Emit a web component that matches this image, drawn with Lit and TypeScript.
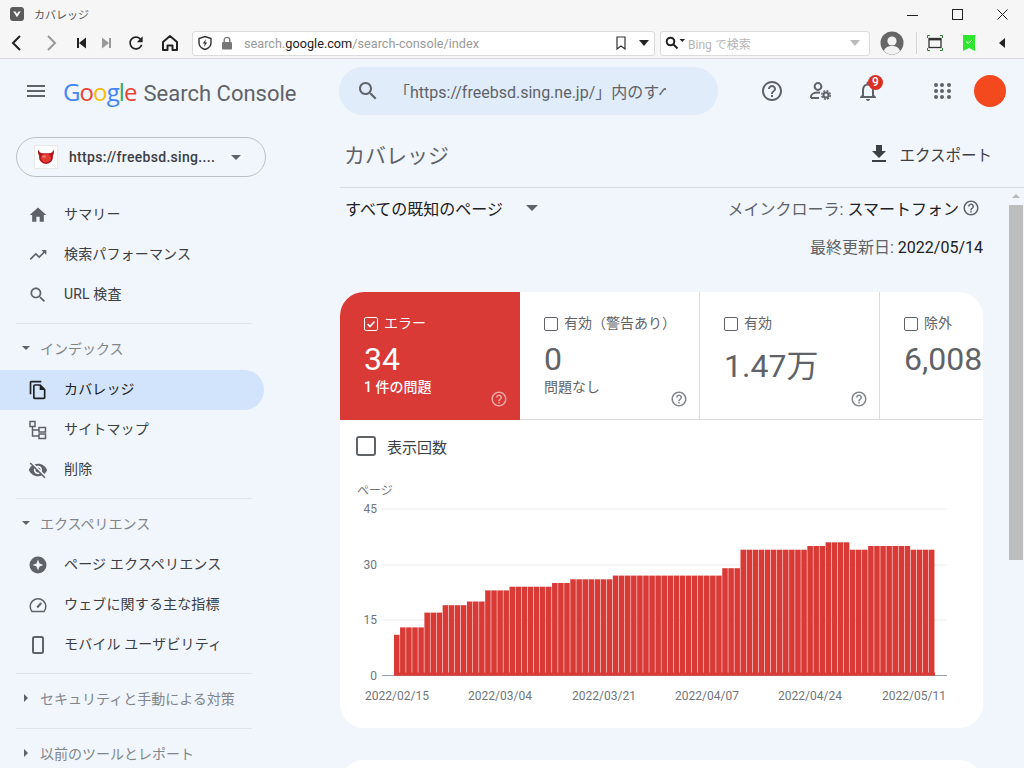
import { LitElement, html, css, svg } from 'lit'
import { customElement } from 'lit/decorators.js'

const icon = (d: string, size = 24) => html`<svg class="ic" width=${size} height=${size} viewBox="0 0 24 24"><path d=${d}></path></svg>`

const HELP = 'M11 18h2v-2h-2v2zm1-16C6.48 2 2 6.48 2 12s4.48 10 10 10 10-4.48 10-10S17.52 2 12 2zm0 18c-4.41 0-8-3.59-8-8s3.59-8 8-8 8 3.59 8 8-3.59 8-8 8zm0-14c-2.21 0-4 1.79-4 4h2c0-1.1.9-2 2-2s2 .9 2 2c0 2-3 1.75-3 5h2c0-2.25 3-2.5 3-5 0-2.21-1.79-4-4-4z'
const SEARCH = 'M15.5 14h-.79l-.28-.27C15.41 12.59 16 11.11 16 9.5 16 5.91 13.09 3 9.5 3S3 5.91 3 9.5 5.91 16 9.5 16c1.61 0 3.09-.59 4.23-1.57l.27.28v.79l5 4.99L20.49 19l-4.99-5zm-6 0C7.01 14 5 11.99 5 9.5S7.01 5 9.5 5 14 7.01 14 9.5 11.99 14 9.5 14z'
const BELL = 'M12 22c1.1 0 2-.9 2-2h-4c0 1.1.9 2 2 2zm6-6v-5c0-3.07-1.63-5.64-4.5-6.32V4c0-.83-.67-1.5-1.5-1.5s-1.5.67-1.5 1.5v.68C7.64 5.36 6 7.92 6 11v5l-2 2v1h16v-1l-2-2zm-2 1H8v-6c0-2.48 1.51-4.5 4-4.5s4 2.02 4 4.5v6z'

const navIcons: Record<string, unknown> = {
  home: icon('M10 20v-6h4v6h5v-8h3L12 3 2 12h3v8z', 20),
  trend: icon('M16 6l2.29 2.29-4.88 4.88-4-4L2 16.59 3.41 18l6-6 4 4 6.3-6.29L22 12V6z', 20),
  search: icon(SEARCH, 20),
  copy: html`<svg class="ic dark" width="20" height="20" viewBox="0 0 24 24"><path d="M16 1H4c-1.1 0-2 .9-2 2v14h2V3h12V1zm-1 4H8c-1.1 0-1.99.9-1.99 2L6 21c0 1.1.89 2 1.99 2H19c1.1 0 2-.9 2-2V11l-6-6zM8 21V7h6v5h5v9H8z"></path></svg>`,
  sitemap: html`<svg width="20" height="20" viewBox="0 0 20 20" fill="none" stroke="#5f6368" stroke-width="1.5"><rect x="2" y="1.5" width="5" height="5"></rect><rect x="11" y="7.5" width="6.5" height="4.5"></rect><rect x="11" y="14" width="6.5" height="4.5"></rect><path d="M4.5 6.5V16H11M4.5 10H11"></path></svg>`,
  eye: icon('M12 7c2.76 0 5 2.24 5 5 0 .65-.13 1.26-.36 1.83l2.92 2.92c1.51-1.26 2.7-2.89 3.43-4.75-1.73-4.39-6-7.5-11-7.5-1.4 0-2.74.25-3.98.7l2.16 2.16C10.74 7.13 11.35 7 12 7zM2 4.27l2.74 2.74C3.08 8.3 1.78 10.02 1 12c1.73 4.39 6 7.5 11 7.5 1.55 0 3.03-.3 4.38-.84L19.73 22 21 20.73 3.27 3 2 4.27zM7.53 9.8l1.55 1.55c-.05.21-.08.43-.08.65 0 1.66 1.34 3 3 3 .22 0 .44-.03.65-.08l1.55 1.55c-.67.33-1.41.53-2.2.53-2.76 0-5-2.24-5-5 0-.79.2-1.53.53-2.2zm4.31-.78l3.15 3.15.02-.16c0-1.66-1.34-3-3-3l-.17.01z', 20),
  star: html`<svg width="20" height="20" viewBox="0 0 20 20"><circle cx="10" cy="10" r="8.5" fill="#5f6368"></circle><path d="M10 4.6l1.5 3.9 3.9 1.5-3.9 1.5-1.5 3.9-1.5-3.9L4.6 10l3.9-1.5z" fill="#f1f5fc"></path></svg>`,
  gauge: html`<svg width="20" height="20" viewBox="0 0 20 20" fill="none" stroke="#5f6368" stroke-width="1.5"><path d="M4 16.5h12a7.8 7.8 0 1 0-12 0z"></path><path d="M9.2 12.5l4-4.5" stroke-width="2"></path></svg>`,
  phone: html`<svg width="20" height="20" viewBox="0 0 20 20" fill="none" stroke="#5f6368" stroke-width="2"><rect x="5" y="2" width="10" height="16" rx="1.5"></rect></svg>`,
}

type NavRow = { kind: 'item'; icon: string; label: string; active?: boolean } | { kind: 'section'; label: string; open?: boolean } | { kind: 'rule' }

const nav: NavRow[] = [
  { kind: 'item', icon: 'home', label: 'サマリー' },
  { kind: 'item', icon: 'trend', label: '検索パフォーマンス' },
  { kind: 'item', icon: 'search', label: 'URL 検査' },
  { kind: 'rule' },
  { kind: 'section', label: 'インデックス', open: true },
  { kind: 'item', icon: 'copy', label: 'カバレッジ', active: true },
  { kind: 'item', icon: 'sitemap', label: 'サイトマップ' },
  { kind: 'item', icon: 'eye', label: '削除' },
  { kind: 'rule' },
  { kind: 'section', label: 'エクスペリエンス', open: true },
  { kind: 'item', icon: 'star', label: 'ページ エクスペリエンス' },
  { kind: 'item', icon: 'gauge', label: 'ウェブに関する主な指標' },
  { kind: 'item', icon: 'phone', label: 'モバイル ユーザビリティ' },
  { kind: 'rule' },
  { kind: 'section', label: 'セキュリティと手動による対策' },
  { kind: 'rule' },
  { kind: 'section', label: '以前のツールとレポート' },
]

const tabs = [
  { label: 'エラー', value: '34', sub: '1 件の問題', on: true, help: true },
  { label: '有効（警告あり）', value: '0', sub: '問題なし', help: true },
  { label: '有効', value: '1.47万', low: true, help: true },
  { label: '除外', value: '6,008' },
]

// [value, days] from 02/15 to 05/14
const runs = [[11, 1], [13, 4], [17, 3], [19, 4], [20, 3], [23, 4], [24, 7], [25, 3], [26, 7], [27, 18], [29, 3], [34, 11], [35, 3], [36, 4], [34, 3], [35, 7], [34, 4]]
const days = runs.flatMap(([v, n]) => Array(n).fill(v) as number[])

const CHART_X = 340
const CHART_Y = 480
const BASE = 675.5
const PER_UNIT = 166.5 / 45
const STEP = 541 / 89

@customElement('app-root')
export class AppRoot extends LitElement {
  static styles = css`
    :host {
      display: block;
      width: 1024px;
      height: 768px;
      overflow: hidden;
      font-family: Roboto, "Noto Sans CJK JP", sans-serif;
      color: #3c4043;
      background: #f1f5fc;
    }
    .ic { fill: #5f6368; display: block; }
    .ic.dark { fill: #202124; }
    .titlebar { height: 28px; background: #f6f6f6; display: flex; align-items: center; padding-left: 10px; font-size: 11px; color: #555; }
    .titlebar .title { margin-left: 10px; flex: 1; }
    .win { display: flex; align-items: center; padding-right: 16px; gap: 34px; }
    .toolbar { box-sizing: border-box; background: #f6f6f6; border-bottom: 1px solid #d8d8d8; display: flex; align-items: center; padding-left: 8px; height: 31px; }
    .tbtn { display: flex; justify-content: center; align-items: center; flex: none; }
    .addr { margin-left: 13px; width: 463px; height: 25px; box-sizing: border-box; background: #fff; border: 1px solid #dcdcdc; border-radius: 3px; display: flex; align-items: center; font-size: 12.7px; color: #9a9a9a; padding-left: 4px; }
    .addr b { font-weight: 400; color: #222; }
    .url { margin-left: 11px; flex: 1; }
    .bsearch { margin-left: 5px; width: 210px; height: 25px; box-sizing: border-box; background: #fff; border: 1px solid #dcdcdc; border-radius: 3px; display: flex; align-items: center; font-size: 12px; color: #b5b5b5; padding: 0 9px 0 4px; }
    .bsearch span { margin-left: 2px; flex: 1; }
    .tools { display: flex; align-items: center; margin-left: 10px; }
    .vrule { width: 1px; height: 22px; background: #d4d4d4; margin: 0 10px 0 12px; }

    .header { height: 71px; box-sizing: border-box; padding-bottom: 7px; display: flex; align-items: center; }
    .burger { margin-left: 27px; width: 18px; height: 12px; border-top: 2px solid #5f6368; border-bottom: 2px solid #5f6368; box-sizing: border-box; position: relative; flex: none; }
    .burger::after { content: ''; position: absolute; left: 0; right: 0; top: 3px; height: 2px; background: #5f6368; }
    .logo { margin-left: 18px; width: 276px; font-size: 22px; color: #5f6368; white-space: nowrap; flex: none; }
    .g { font-family: "Open Sans", sans-serif; font-size: 24px; letter-spacing: -.9px; margin-right: 7px; }
    .hsearch { width: 379px; height: 48px; box-sizing: border-box; background: #e0ecfa; border-radius: 24px; display: flex; align-items: center; padding-left: 17px; flex: none; }
    .hsearch span { margin-left: 14px; width: 272px; overflow: hidden; white-space: nowrap; font-size: 16px; color: #5f6368; }
    .hicons { margin-left: 42px; display: flex; align-items: center; gap: 24px; }
    .bell { position: relative; }
    .badge { position: absolute; left: 12px; top: -4px; width: 15px; height: 15px; border-radius: 50%; background: #d93025; color: #fff; font-size: 12px; line-height: 15px; text-align: center; font-weight: 500; }
    .apps { margin-left: 54px; display: grid; grid-template-columns: repeat(3, 4px); gap: 2.4px; }
    .apps i { width: 4px; height: 4px; border-radius: 50%; background: #5f6368; }
    .me { margin-left: 23px; width: 32px; height: 32px; border-radius: 50%; background: #f4491f; flex: none; }

    .body { display: flex; height: 638px; }
    .side { width: 340px; flex: none; padding-top: 7px; box-sizing: border-box; overflow: hidden; }
    .prop { margin-left: 16px; width: 250px; height: 40px; box-sizing: border-box; border: 1px solid #bdc1c6; border-radius: 20px; display: flex; align-items: center; padding-left: 17px; margin-bottom: 18px; font-size: 14px; font-weight: 500; letter-spacing: .3px; color: #3c4043; }
    .fav { width: 24px; height: 24px; background: #fff; border: 1px solid #e8e8e8; box-sizing: border-box; margin-right: 11px; flex: none; }
    .fav svg { display: block; }
    .prop .name { flex: 1; white-space: nowrap; }
    .prop .drop { width: 0; height: 0; border: 5px solid transparent; border-top: 5px solid #5f6368; border-bottom: 0; margin-right: 24px; }
    .item { width: 264px; height: 40px; box-sizing: border-box; padding-left: 28px; display: flex; align-items: center; gap: 16px; font-size: 14px; letter-spacing: .15px; color: #3c4043; border-radius: 0 20px 20px 0; }
    .item span { padding-bottom: 4px; }
    .item.active { background: #d2e3fc; color: #202124; }
    .item svg { flex: none; }
    .rule { width: 236px; margin: 8px 0 0 16px; height: 1px; background: #e0e3e7; }
    .sec { height: 46px; box-sizing: border-box; padding: 2px 0 0 21px; display: flex; align-items: center; font-size: 14px; color: #80868b; }
    .tri { width: 10px; margin-right: 9px; display: flex; justify-content: center; }
    .tri.open i { border: 4.5px solid transparent; border-top: 4.5px solid #5f6368; border-bottom: 0; }
    .tri.shut i { border: 4.5px solid transparent; border-left: 4.5px solid #5f6368; border-right: 0; }

    .main { flex: 1; min-width: 0; display: flex; flex-direction: column; }
    .mhead { height: 58px; box-sizing: border-box; border-bottom: 1px solid #dadce0; display: flex; align-items: center; justify-content: space-between; padding: 0 32px 9px 4px; }
    .mhead h1 { margin: 0; font-size: 21px; font-weight: 400; color: #5f6368; }
    .export { display: flex; align-items: center; gap: 8px; font-size: 15.500px; color: #3c4043; }
    .scrollwrap { flex: 1; min-height: 0; display: flex; }
    .content { flex: 1; min-width: 0; padding-right: 25px; overflow: hidden; }
    .bar { width: 16px; flex: none; background: #f1f5fc; display: flex; flex-direction: column; align-items: center; }
    .up { margin-top: 6px; border: 4px solid transparent; border-bottom: 4px solid #b8b8b8; border-top: 0; height: 0; }
    .thumb { margin-top: 7px; width: 14px; height: 355px; background: #bdbdbd; }
    .filter { height: 40px; box-sizing: border-box; padding: 0 3px 0 5px; display: flex; align-items: center; justify-content: space-between; }
    .all { display: flex; align-items: center; font-size: 16px; color: #202124; padding-bottom: 1px; }
    .all i { margin-left: 23px; border: 6px solid transparent; border-top: 6px solid #5f6368; border-bottom: 0; }
    .crawler { display: flex; align-items: center; gap: 3px; font-size: 16px; color: #5f6368; }
    .crawler b, .updated b { font-weight: 400; color: #202124; }
    .updated { height: 36px; margin-bottom: 28px; display: flex; align-items: center; justify-content: flex-end; font-size: 16px; color: #5f6368; }

    .card { background: #fff; border-radius: 24px; overflow: hidden; height: 436px; margin-bottom: 32px; }
    .stub { background: #fff; border-radius: 24px; height: 100px; }
    .tabs { display: flex; height: 128px; box-sizing: border-box; border-bottom: 1px solid #dadce0; }
    .tab { width: 180px; flex: none; box-sizing: border-box; padding: 23px 0 0 24px; position: relative; border-right: 1px solid #dadce0; color: #5f6368; white-space: nowrap; height: 127px; }
    .tab.on { background: #d93a36; color: #fff; border-right: 0; height: 128px; }
    .tab:last-child { border-right: 0; }
    .tlabel { display: flex; align-items: center; gap: 6px; font-size: 14px; height: 18px; }
    .tlabel span:last-child { padding-bottom: 4px; }
    .box { width: 14px; height: 14px; box-sizing: border-box; border: 1px solid #5f6368; border-radius: 2px; flex: none; }
    .tab.on .box { border-color: #fff; }
    .box svg { display: block; }
    .num { font-size: 32px; line-height: 38px; margin-top: 7px; }
    .num.low { margin-top: 14px; }
    .tsub { font-size: 14px; line-height: 18px; }
    .tab.on .tsub { font-weight: 500; }
    .thelp { position: absolute; right: 12px; top: 98px; }
    .tab:not(.on) .thelp { right: 11px; }
    .tab.on .thelp .ic { fill: #fff; opacity: .55; }
    .tab:not(.on) .thelp .ic { fill: #80868b; }
    .show { height: 52px; display: flex; align-items: center; padding-left: 16px; gap: 11px; font-size: 15px; color: #3c4043; margin-bottom: 8px; }
    .show .big { width: 20px; height: 20px; box-sizing: border-box; border: 2px solid #5f6368; border-radius: 3px; }
    .chart { display: block; }
    .chart text { font-size: 12px; fill: #70757a; font-family: Roboto, "Noto Sans CJK JP", sans-serif; }
  `

  private renderNav(row: NavRow) {
    if (row.kind === 'rule') return html`<div class="rule"></div>`
    if (row.kind === 'section') {
      return html`<div class="sec"><span class="tri ${row.open ? 'open' : 'shut'}"><i></i></span>${row.label}</div>`
    }
    return html`<div class="item ${row.active ? 'active' : ''}">${navIcons[row.icon]}<span>${row.label}</span></div>`
  }

  private renderChart() {
    const ty = (y: number) => y - CHART_Y
    const tx = (x: number) => x - CHART_X
    const grid = [[45, 509], [30, 565], [15, 620]]
    const dates = [['2022/02/15', 397], ['2022/03/04', 500], ['2022/03/21', 604], ['2022/04/07', 707], ['2022/04/24', 810], ['2022/05/11', 914]] as const
    return html`<svg class="chart" width="643" height="248" viewBox="0 0 643 248">
      <text x=${tx(357)} y=${ty(495)}>ページ</text>
      ${grid.map(([v, y]) => svg`<line x1=${tx(382)} x2=${tx(947)} y1=${ty(y)} y2=${ty(y)} stroke="#ececec"></line>
        <text x=${tx(377)} y=${ty(y) + 4} text-anchor="end">${v}</text>`)}
      <line x1=${tx(382)} x2=${tx(947)} y1=${ty(BASE)} y2=${ty(BASE)} stroke="#9aa0a6"></line>
      <text x=${tx(377)} y=${ty(BASE) + 4} text-anchor="end">0</text>
      ${days.map((v, i) => {
        const h = v * PER_UNIT
        return svg`<rect x=${tx(394) + i * STEP} y=${ty(BASE) - h} width=${STEP - 0.55} height=${h} fill="#d93a36"></rect>`
      })}
      <rect x=${tx(394)} y=${ty(BASE) - 3} width="541" height="3" fill="#d93a36"></rect>
      ${dates.map(([d, x]) => svg`<text x=${tx(x)} y=${ty(700)} text-anchor="middle">${d}</text>`)}
    </svg>`
  }

  render() {
    return html`
      <div class="titlebar">
        <svg width="14" height="14" viewBox="0 0 14 14"><rect width="14" height="14" rx="3" fill="#5c5c5c"></rect><path d="M3.2 4.6l3.8 5.6 3.8-5.6h-2.3L7 7 5.5 4.6z" fill="#fff"></path></svg>
        <span class="title">カバレッジ</span>
        <div class="win">
          <svg width="11" height="11" viewBox="0 0 11 11" stroke="#222"><path d="M0 6.5h11"></path></svg>
          <svg width="11" height="11" viewBox="0 0 11 11" fill="none" stroke="#222"><rect x=".5" y=".5" width="10" height="10"></rect></svg>
          <svg width="11" height="11" viewBox="0 0 11 11" stroke="#222"><path d="M.5.5l10 10M10.5.5l-10 10"></path></svg>
        </div>
      </div>
      <div class="toolbar">
        <svg class="tbtn" width="18" height="18" viewBox="0 0 18 18" fill="none" stroke="#222" stroke-width="2"><path d="M12 2L5 9l7 7"></path></svg>
        <svg class="tbtn" style="margin-left:16px" width="18" height="18" viewBox="0 0 18 18" fill="none" stroke="#999" stroke-width="2"><path d="M6 2l7 7-7 7"></path></svg>
        <svg class="tbtn" style="margin-left:15px" width="12" height="14" viewBox="0 0 12 14" fill="#222"><path d="M2 2h2v10H2zM4 7l7-5.5v11z"></path></svg>
        <svg class="tbtn" style="margin-left:14px" width="12" height="14" viewBox="0 0 12 14" fill="#999"><path d="M10 2H8v10h2zM8 7L1 1.5v11z"></path></svg>
        <svg class="tbtn" style="margin-left:13px" width="20" height="20" viewBox="0 0 24 24" fill="#222"><path d="M17.65 6.35C16.2 4.9 14.21 4 12 4c-4.42 0-7.99 3.58-7.99 8s3.57 8 7.99 8c3.73 0 6.84-2.55 7.73-6h-2.08c-.82 2.33-3.04 4-5.65 4-3.31 0-6-2.69-6-6s2.69-6 6-6c1.66 0 3.14.69 4.22 1.78L13 11h7V4l-2.35 2.35z"></path></svg>
        <svg class="tbtn" style="margin-left:15px" width="18" height="18" viewBox="0 0 18 18" fill="none" stroke="#222" stroke-width="2" stroke-linejoin="round"><path d="M2 8l7-6 7 6v8h-4.5v-4.5h-5V16H2z"></path></svg>
        <div class="addr">
          <svg width="16" height="16" viewBox="0 0 16 16"><path d="M8 1.5l6 2v4.2c0 3.2-2.4 5.6-6 6.8-3.6-1.2-6-3.6-6-6.8V3.5z" fill="none" stroke="#333" stroke-width="1.4"></path><path d="M9 4L5.8 8.6h2L7 12l3.2-4.6h-2z" fill="#333"></path></svg>
          <svg style="margin-left:8px" width="12" height="14" viewBox="0 0 12 14"><rect x="1" y="6" width="10" height="7.5" rx="1" fill="#777"></rect><path d="M3.2 6V4.2a2.8 2.8 0 0 1 5.6 0V6" fill="none" stroke="#777" stroke-width="1.4"></path></svg>
          <span class="url">search.<b>google.com</b>/search-console/index</span>
          <svg width="10" height="14" viewBox="0 0 10 14" fill="none" stroke="#333" stroke-width="1.2"><path d="M1 1h8v12L5 10l-4 3z"></path></svg>
          <svg style="margin:0 5px 0 13px" width="10" height="6" viewBox="0 0 10 6"><path d="M0 0h10L5 6z" fill="#222"></path></svg>
        </div>
        <div class="bsearch">
          <svg width="21" height="14" viewBox="0 0 21 14" fill="none" stroke="#222" stroke-width="2"><circle cx="5.5" cy="5.5" r="3.8"></circle><path d="M8.5 8.5l4 4"></path><path d="M14.5 3h5.5l-2.7 3z" fill="#222" stroke="none"></path></svg>
          <span>Bing で検索</span>
          <svg width="10" height="6" viewBox="0 0 10 6"><path d="M0 0h10L5 6z" fill="#bbb"></path></svg>
        </div>
        <div class="tools">
          <svg width="24" height="24" viewBox="0 0 24 24"><circle cx="12" cy="12" r="11.5" fill="#666"></circle><circle cx="12" cy="10" r="4.6" fill="#f2f2f2"></circle><path d="M3.8 20c1.5-4 4.5-5 8.2-5s6.700 1 8.200 5a11.500 11.500 0 0 1-16.400 0z" fill="#f2f2f2"></path></svg>
          <div class="vrule"></div>
          <svg width="16" height="16" viewBox="0 0 16 16" fill="none"><rect x="2" y="3.500" width="12" height="9" stroke="#333" stroke-width="1.300"></rect><path d="M2 4.600h12" stroke="#333" stroke-width="1.600"></path><path d="M.5 3V.5H3M13 .5h2.500V3M.5 13v2.500H3M13 15.500h2.500V13" stroke="#2e8b2e"></path></svg>
          <svg style="margin-left:20px" width="12" height="16" viewBox="0 0 12 16"><path d="M0 0h12v16l-6-3-6 3z" fill="#2ee62e"></path><path d="M3 6.500l2.200 1.800L9 5" fill="none" stroke="#fff"></path></svg>
          <svg style="margin-left:24px" width="6" height="10" viewBox="0 0 6 10"><path d="M6 0v10L0 5z" fill="#222"></path></svg>
        </div>
      </div>

      <div class="header">
        <div class="burger"></div>
        <div class="logo"><span class="g"><span style="color:#4285f4">G</span><span style="color:#ea4335">o</span><span style="color:#fbbc05">o</span><span style="color:#4285f4">g</span><span style="color:#34a853">l</span><span style="color:#ea4335">e</span></span>Search Console</div>
        <div class="hsearch">
          ${icon(SEARCH)}
          <span>「https://freebsd.sing.ne.jp/」内のすべてのURLを検査</span>
        </div>
        <div class="hicons">
          ${icon(HELP)}
          <svg width="24" height="24" viewBox="0 0 24 24" fill="none" stroke="#5f6368" stroke-width="2"><circle cx="10" cy="7.500" r="3.400"></circle><path d="M3 19v-1.500c0-2.500 3.500-4 7-4 .8 0 1.500.1 2 .2M3 19h8"></path><circle cx="18" cy="16" r="2.500"></circle><circle cx="18" cy="16" r="4.200" stroke-width="1.500" stroke-dasharray="2 1.300"></circle></svg>
          <div class="bell">${icon(BELL)}<div class="badge">9</div></div>
        </div>
        <div class="apps">${Array(9).fill(0).map(() => html`<i></i>`)}</div>
        <div class="me"></div>
      </div>

      <div class="body">
        <div class="side">
          <div class="prop">
            <div class="fav"><svg width="22" height="22" viewBox="0 0 22 22"><path d="M3.500 3.500c.5 2.500 2 3.500 4 3.800h7c2-.3 3.500-1.300 4-3.800.8 2.500.5 4.500-.6 6.200A7 7 0 1 1 4.100 9.700C3 8 2.700 6 3.500 3.500z" fill="#b5121b"></path><ellipse cx="11" cy="12" rx="5" ry="4.200" fill="#e23b32"></ellipse><ellipse cx="9" cy="10.500" rx="2" ry="1.300" fill="#f07a6e"></ellipse></svg></div>
            <span class="name">https://freebsd.sing....</span>
            <span class="drop"></span>
          </div>
          ${nav.map((r) => this.renderNav(r))}
        </div>
        <div class="main">
          <div class="mhead">
            <h1>カバレッジ</h1>
            <div class="export"><svg class="ic dark" width="24" height="24" viewBox="0 0 24 24" style="fill:#3c4043"><path d="M19 9h-4V3H9v6H5l7 7 7-7zM5 18v2h14v-2H5z"></path></svg>エクスポート</div>
          </div>
          <div class="scrollwrap">
            <div class="content">
              <div class="filter">
                <div class="all">すべての既知のページ<i></i></div>
                <div class="crawler"><span>メインクローラ: <b>スマートフォン</b></span>${icon(HELP, 18)}</div>
              </div>
              <div class="updated"><span>最終更新日: <b>2022/05/14</b></span></div>
              <div class="card">
                <div class="tabs">
                  ${tabs.map((t) => html`<div class="tab ${t.on ? 'on' : ''}">
                    <div class="tlabel">
                      <span class="box">${t.on ? html`<svg width="12" height="12" viewBox="0 0 12 12"><path d="M2.500 6l2.500 2.500 4.500-5" fill="none" stroke="#fff" stroke-width="1.600"></path></svg>` : ''}</span>
                      <span>${t.label}</span>
                    </div>
                    <div class="num ${t.low ? 'low' : ''}">${t.value}</div>
                    ${t.sub ? html`<div class="tsub">${t.sub}</div>` : ''}
                    ${t.help ? html`<div class="thelp">${icon(HELP, 18)}</div>` : ''}
                  </div>`)}
                </div>
                <div class="show"><span class="big"></span>表示回数</div>
                ${this.renderChart()}
              </div>
              <div class="stub"></div>
            </div>
            <div class="bar"><div class="up"></div><div class="thumb"></div></div>
          </div>
        </div>
      </div>
    `
  }
}
